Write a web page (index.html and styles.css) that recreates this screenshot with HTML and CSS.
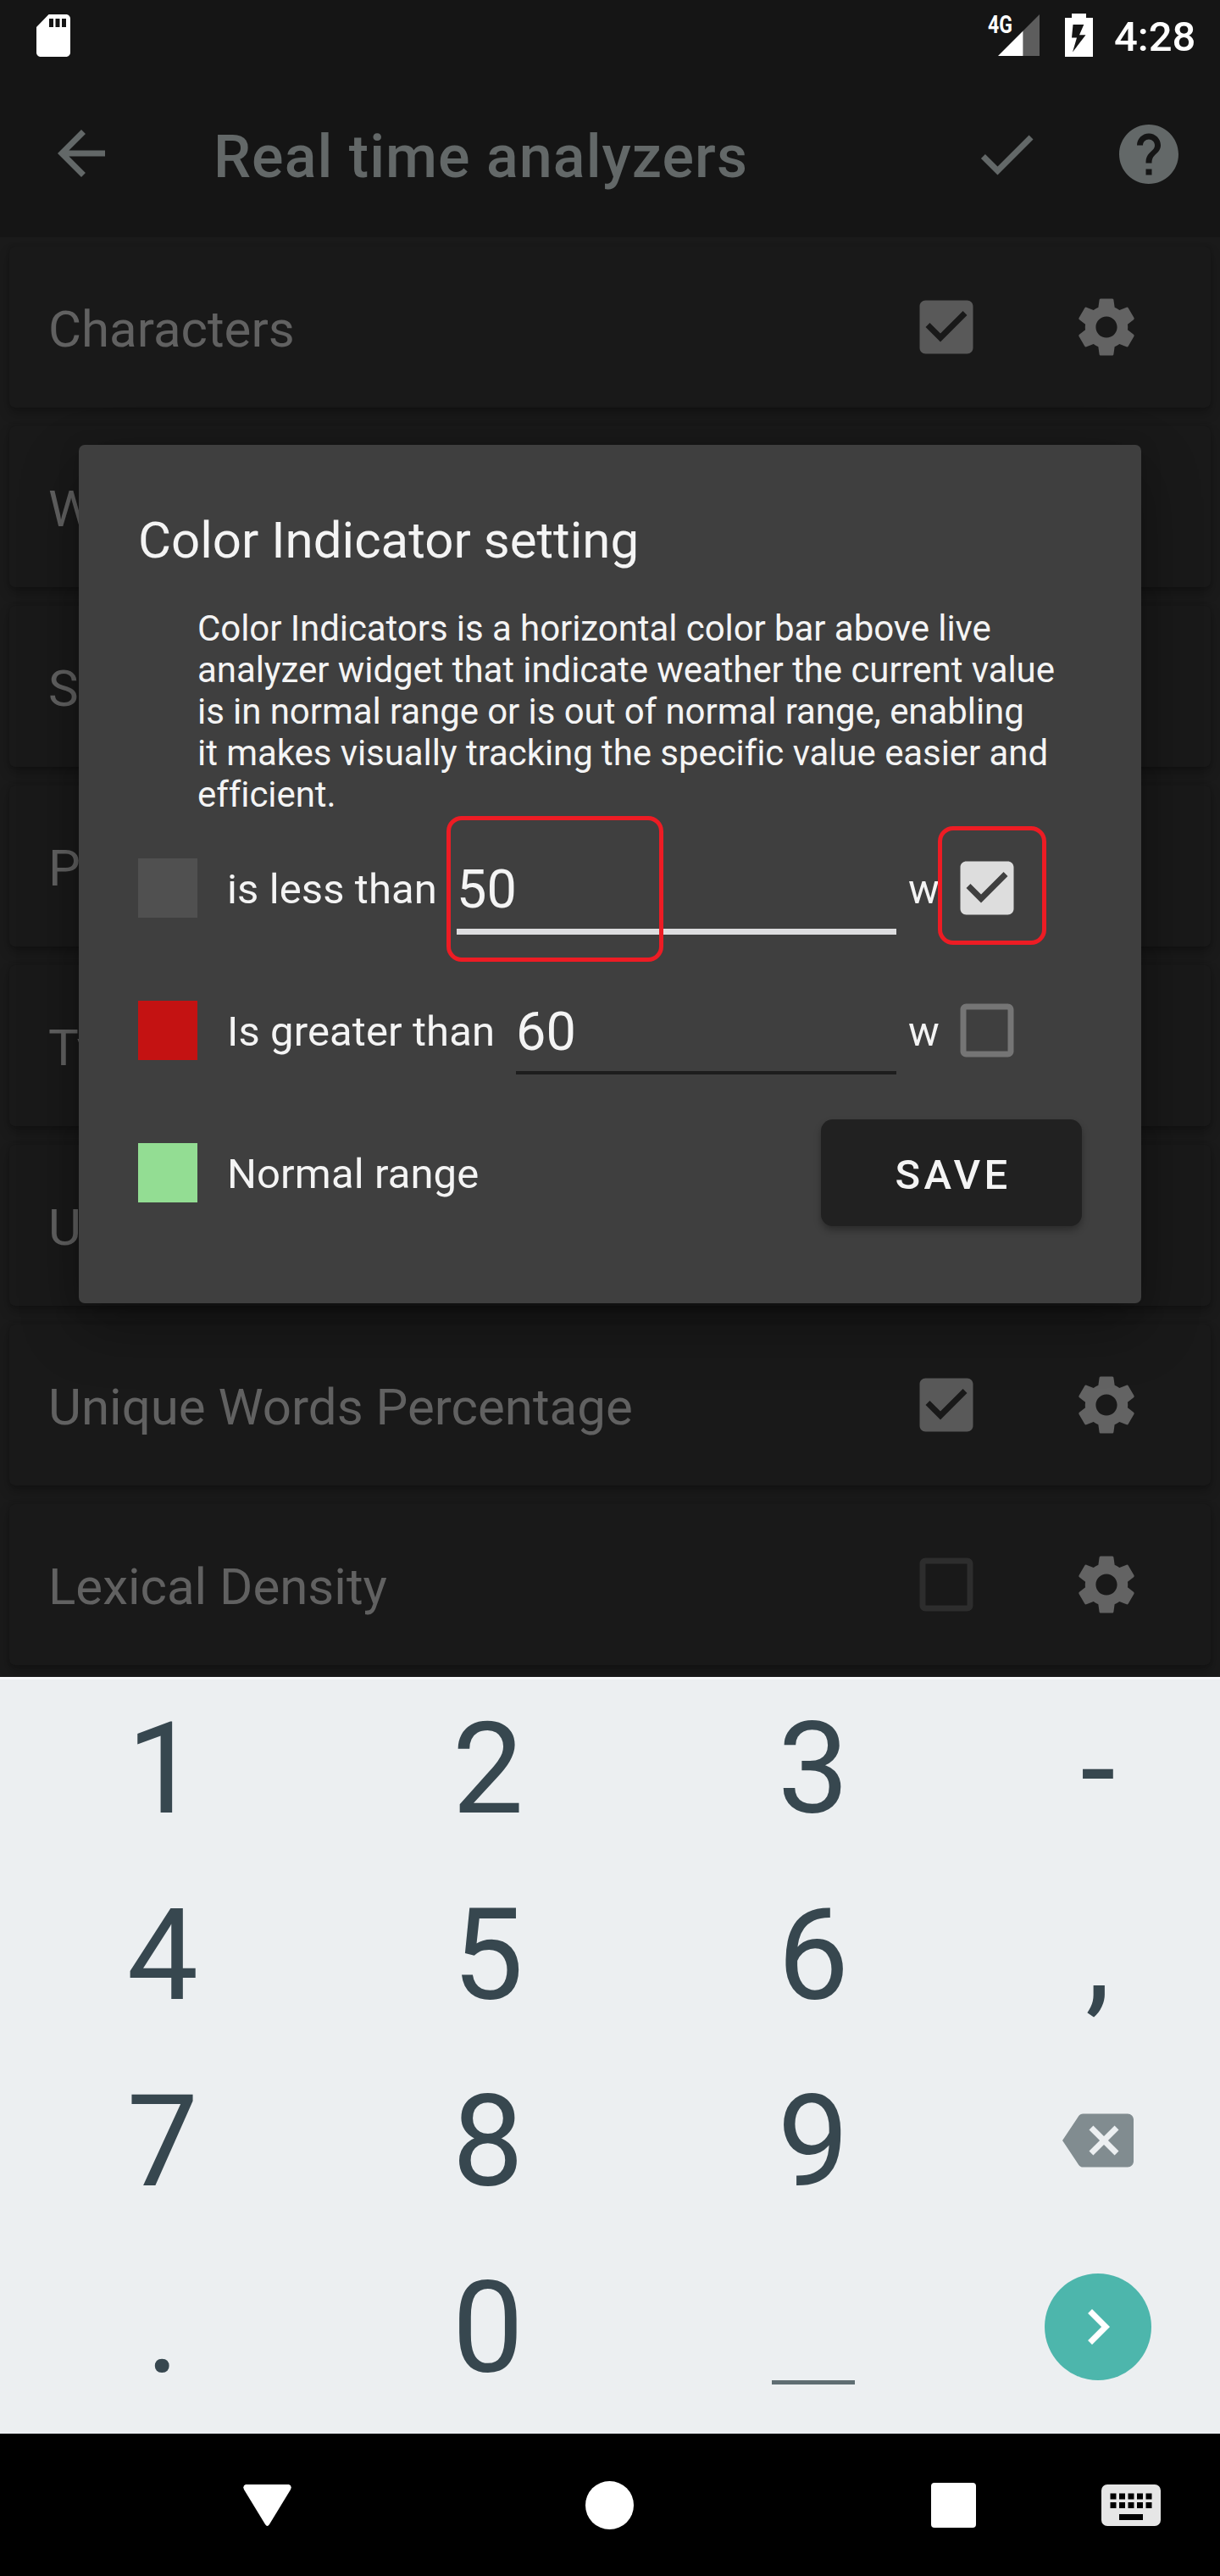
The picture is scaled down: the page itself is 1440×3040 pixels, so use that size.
FILE: index.html
```html
<!DOCTYPE html>
<html lang="en">
<head>
<meta charset="utf-8">
<title>Real time analyzers</title>
<link rel="stylesheet" href="styles.css">
</head>
<body>
<svg class="symbols" width="0" height="0" aria-hidden="true">
  <symbol id="box-on" viewBox="0 0 24 24"><path d="M19 3H5c-1.11 0-2 .9-2 2v14c0 1.1.89 2 2 2h14c1.11 0 2-.9 2-2V5c0-1.1-.89-2-2-2zm-9 14l-5-5 1.41-1.41L10 14.17l7.59-7.59L19 8l-9 9z"/></symbol>
  <symbol id="box-off" viewBox="0 0 24 24"><path d="M19 5v14H5V5h14m0-2H5c-1.1 0-2 .9-2 2v14c0 1.1.9 2 2 2h14c1.1 0 2-.9 2-2V5c0-1.1-.9-2-2-2z"/></symbol>
  <symbol id="gear" viewBox="0 0 24 24"><path d="M19.14 12.94c.04-.3.06-.61.06-.94 0-.32-.02-.64-.07-.94l2.03-1.58c.18-.14.23-.41.12-.61l-1.92-3.32c-.12-.22-.37-.29-.59-.22l-2.39.96c-.5-.38-1.03-.7-1.62-.94L14.4 2.81c-.04-.24-.24-.41-.48-.41h-3.84c-.24 0-.43.17-.47.41L9.25 5.35C8.66 5.59 8.12 5.92 7.63 6.29L5.24 5.33c-.22-.08-.47 0-.59.22L2.74 8.87c-.12.21-.08.47.12.61l2.03 1.58c-.05.3-.09.63-.09.94s.02.64.07.94l-2.03 1.58c-.18.14-.23.41-.12.61l1.92 3.32c.12.22.37.29.59.22l2.39-.96c.5.38 1.03.7 1.62.94l.36 2.54c.05.24.24.41.48.41h3.84c.24 0 .44-.17.47-.41l.36-2.54c.59-.24 1.13-.56 1.62-.94l2.39.96c.22.08.47 0 .59-.22l1.92-3.32c.12-.22.07-.47-.12-.61l-2.01-1.58zM12 15.6c-1.98 0-3.6-1.62-3.6-3.6s1.62-3.6 3.6-3.6 3.6 1.62 3.6 3.6-1.62 3.6-3.6 3.6z"/></symbol>
</svg>

<div class="screen">
  <div class="app">
    <div class="status">
      <svg class="sd" viewBox="0 0 24 24"><path d="M18 2h-8.2L4 8v12c0 1.100.9 2 2 2h12c1.100 0 2-.9 2-2V4c0-1.100-.9-2-2-2zm-6 6h-2V4h2v4zm3 0h-2V4h2v4zm3 0h-2V4h2v4z"/></svg>
      <svg class="signal" viewBox="0 0 62 51">
        <text class="net" x="0" y="23" textLength="29" lengthAdjust="spacingAndGlyphs">4G</text>
        <path d="M41.500 20.500L61 1v49H41.500z" fill="#5d5d5d"/>
        <path d="M12 50l29.500-29.500V50z" fill="#fff"/>
      </svg>
      <svg class="battery" viewBox="0 0 33 51"><path fill-rule="evenodd" d="M8 0h17v5h8v46H0V5h8zM9.500 13L8 28.500h6L9 45.500 24.500 25.200h-7.500L22.300 13z"/></svg>
      <span class="clock">4:28</span>
    </div>
    <div class="toolbar">
      <svg class="icon arrow" viewBox="0 0 24 24"><path d="M20 11H7.830l5.590-5.590L12 4l-8 8 8 8 1.410-1.410L7.830 13H20v-2z"/></svg>
      <h1 class="title">Real time analyzers</h1>
      <svg class="icon" viewBox="0 0 24 24"><path d="M9 16.170L4.830 12l-1.420 1.410L9 19 21 7l-1.410-1.410z"/></svg>
      <svg class="icon" viewBox="0 0 24 24"><path d="M12 2C6.480 2 2 6.480 2 12s4.480 10 10 10 10-4.480 10-10S17.520 2 12 2zm1 17h-2v-2h2v2zm2.070-7.750l-.9.920C13.450 12.900 13 13.500 13 15h-2v-.5c0-1.100.45-2.100 1.170-2.830l1.240-1.260c.37-.36.59-.86.59-1.410 0-1.100-.9-2-2-2s-2 .9-2 2H8c0-2.210 1.790-4 4-4s4 1.790 4 4c0 .88-.36 1.680-.93 2.250z"/></svg>
    </div>
    <div class="list">
      <div class="card"><span class="name">Characters</span><svg class="icon check"><use href="#box-on"/></svg><svg class="icon gear"><use href="#gear"/></svg></div>
      <div class="card"><span class="name">Words</span></div>
      <div class="card"><span class="name">Sentences</span></div>
      <div class="card"><span class="name">Paragraphs</span></div>
      <div class="card"><span class="name">Typing</span></div>
      <div class="card"><span class="name">Unique Words</span></div>
      <div class="card"><span class="name">Unique Words Percentage</span><svg class="icon check"><use href="#box-on"/></svg><svg class="icon gear"><use href="#gear"/></svg></div>
      <div class="card"><span class="name">Lexical Density</span><svg class="icon check off"><use href="#box-off"/></svg><svg class="icon gear"><use href="#gear"/></svg></div>
    </div>

    <div class="dialog">
      <h2 class="dialog-title">Color Indicator setting</h2>
      <p class="about">Color Indicators is a horizontal color bar above live<br>analyzer widget that indicate weather the current value<br>is in normal range or is out of normal range, enabling<br>it makes visually tracking the specific value easier and<br>efficient.</p>
      <div class="row">
        <span class="swatch gray"></span>
        <span class="label">is less than</span>
        <span class="field active">50<span class="mark mark-field"></span></span>
        <span class="unit">w</span>
        <span class="toggle"><svg class="icon on"><use href="#box-on"/></svg><span class="mark mark-toggle"></span></span>
      </div>
      <div class="row">
        <span class="swatch red"></span>
        <span class="label wide">Is greater than</span>
        <span class="field">60</span>
        <span class="unit">w</span>
        <span class="toggle"><svg class="icon"><use href="#box-off"/></svg></span>
      </div>
      <div class="row">
        <span class="swatch green"></span>
        <span class="label">Normal range</span>
        <button class="save">SAVE</button>
      </div>
    </div>
  </div>

  <div class="keyboard">
    <span class="key">1</span><span class="key">2</span><span class="key">3</span><span class="key">-</span>
    <span class="key">4</span><span class="key">5</span><span class="key">6</span><span class="key">,</span>
    <span class="key">7</span><span class="key">8</span><span class="key">9</span>
    <span class="key"><svg class="icon erase" viewBox="0 0 24 24"><path d="M22 3H7c-.69 0-1.230.35-1.590.88L0 12l5.410 8.110c.36.53.9.89 1.590.89h15c1.100 0 2-.9 2-2V5c0-1.100-.9-2-2-2zm-3 12.590L17.590 17 14 13.410 10.410 17 9 15.590 12.590 12 9 8.410 10.410 7 14 10.590 17.590 7 19 8.410 15.410 12 19 15.590z"/></svg></span>
    <span class="key">.</span><span class="key">0</span>
    <span class="key"><span class="space"></span></span>
    <span class="key"><span class="enter"><svg class="icon" viewBox="0 0 24 24"><path d="M10 6L8.590 7.410 13.170 12l-4.580 4.590L10 18l6-6z"/></svg></span></span>
  </div>

  <div class="nav">
    <svg class="back" viewBox="0 0 57 50"><path d="M3 0h51q4 1.500 2 6L31 47q-2.500 4-5 0L1 6Q-1 1.500 3 0z"/></svg>
    <span class="home"></span>
    <span class="recent"></span>
    <svg class="ime" viewBox="0 0 20 14"><path fill-rule="evenodd" d="M2 0h16a2 2 0 0 1 2 2v10a2 2 0 0 1-2 2H2a2 2 0 0 1-2-2V2a2 2 0 0 1 2-2zM3 3v2h2V3zM6 3v2h2V3zM9 3v2h2V3zM12 3v2h2V3zM15 3v2h2V3zM3 6v2h2V6zM6 6v2h2V6zM9 6v2h2V6zM12 6v2h2V6zM15 6v2h2V6zM6 10v2h8v-2z"/></svg>
  </div>
</div>
</body>
</html>
```
FILE: styles.css
```css
* { box-sizing: border-box; }

body {
  margin: 0;
  background: #000;
  font-family: Roboto, "Noto Sans", sans-serif;
}

h1, h2, p { margin: 0; font-weight: 400; }
svg { display: block; flex: none; fill: currentColor; }
.symbols { position: absolute; }
.icon { width: 84px; height: 84px; }

.screen {
  display: flex;
  flex-direction: column;
  width: 1440px;
  height: 3040px;
  overflow: hidden;
}

.app {
  position: relative;
  height: 1979px;
  overflow: hidden;
  background: #1a1a1a;
}

/* status bar */
.status {
  display: flex;
  height: 84px;
  padding: 0 31px 0 33px;
  background: #151515;
  color: #fff;
}
.sd { width: 60px; height: 60px; margin-top: 12px; }
.signal { width: 62px; height: 51px; margin: 16px 0 0 auto; overflow: visible; }
.net { font-size: 30px; font-weight: 700; fill: #fff; }
.battery { width: 33px; height: 51px; margin: 16px 0 0 29px; }
.clock {
  width: 94px;
  margin-left: 25px;
  font-size: 49px;
  font-weight: 500;
  line-height: 88px;
  white-space: nowrap;
}

/* toolbar */
.toolbar {
  display: flex;
  align-items: center;
  height: 196px;
  padding: 0 42px 0 54px;
  background: #151515;
  color: #636868;
}
.toolbar .icon { margin-bottom: 1px; }
.toolbar .arrow { margin-bottom: 3px; }
.title {
  flex: 1;
  margin-left: 114px;
  padding-top: 6px;
  font-size: 70px;
  font-weight: 500;
  line-height: 82px;
  letter-spacing: 1.05px;
}
.toolbar .icon:last-child { margin-left: 84px; }

/* analyzer list */
.list {
  display: flex;
  flex-direction: column;
  gap: 22px;
  padding: 11px 11px 0;
}
.card {
  display: flex;
  align-items: center;
  flex: none;
  height: 190px;
  padding: 0 81px 0 46px;
  border-radius: 7px;
  background: #191919;
  box-shadow: 0 7px 13px rgba(0, 0, 0, .26), 0 0 4px rgba(0, 0, 0, .14);
  color: #616161;
}
.name { flex: 1; padding-top: 5px; font-size: 60px; line-height: 70px; }
.check { color: #595959; }
.check.off { color: #2d2d2d; }
.gear { margin-left: 105px; color: #636363; }

/* dialog */
.dialog {
  position: absolute;
  top: 525px;
  left: 93px;
  width: 1254px;
  height: 1013px;
  padding: 78px 70px 0;
  border-radius: 7px;
  background: #3f3f3f;
  box-shadow: 0 28px 70px rgba(0, 0, 0, .3), 0 4px 24px rgba(0, 0, 0, .15);
  color: #f4f4f4;
}
.dialog-title { font-size: 60px; line-height: 70px; }
.about {
  margin: 44px 0 2px;
  padding-left: 70px;
  font-size: 42px;
  line-height: 49px;
  letter-spacing: -.07px;
  white-space: nowrap;
}
.row { display: flex; align-items: center; height: 168px; }
.swatch { flex: none; width: 70px; height: 70px; }
.gray { background: #505050; }
.red { background: #c41212; }
.green { background: #93dd93; }
.label {
  flex: none;
  width: 271px;
  margin-left: 35px;
  padding-top: 4px;
  font-size: 49px;
  line-height: 58px;
  letter-spacing: .1px;
  white-space: nowrap;
}
.label.wide { width: 341px; }
.field {
  position: relative;
  flex: 1;
  align-self: flex-start;
  margin-top: 31px;
  padding-top: 8px;
  border-bottom: 4px solid #1d1d1d;
  font-size: 63px;
  line-height: 93px;
}
.field.active { border-bottom: 7px solid #dddddf; }
.unit { margin-left: 14px; padding-top: 4px; font-size: 49px; line-height: 58px; width: 37px; }
.toggle { position: relative; margin: 0 70px 0 14px; color: #757575; }
.toggle .on { color: #ddd; }
.mark { position: absolute; border: 5px solid #ed1c24; border-radius: 18px; }
.mark-field { left: -12px; top: -32px; width: 256px; height: 172px; }
.mark-toggle { left: -16px; top: -31px; width: 128px; height: 140px; }
.save {
  width: 308px;
  height: 126px;
  margin-left: auto;
  padding: 5px 0 0 4px;
  border: 0;
  border-radius: 14px;
  background: #212121;
  box-shadow: 0 5px 9px rgba(0, 0, 0, .3);
  color: #f4f4f4;
  font: 500 49px/58px Roboto, "Noto Sans", sans-serif;
  letter-spacing: 4.4px;
}

/* number keyboard */
.keyboard {
  display: grid;
  grid-template-columns: 384px 384px 384px 288px;
  grid-auto-rows: 220px;
  height: 893px;
  border-top: 3px solid #f7f8fa;
  background: #eceff1;
  color: #37474f;
}
.key {
  display: flex;
  align-items: center;
  justify-content: center;
  padding-bottom: 8px;
  font-size: 150px;
  line-height: 210px;
}
.erase { margin-top: -4px; color: #818c90; }
.space { width: 98px; height: 5px; margin-top: 127px; background: #5f6e73; }
.enter {
  display: flex;
  align-items: center;
  justify-content: center;
  width: 126px;
  height: 126px;
  margin-top: -4px;
  border-radius: 50%;
  background: #4db6ac;
  color: #fff;
}

/* navigation bar */
.nav {
  display: flex;
  align-items: center;
  height: 168px;
  padding-left: 287px;
  background: #000;
  color: #fff;
}
.back { width: 57px; height: 50px; margin-top: 1px; }
.home { width: 57px; height: 57px; margin-left: 347px; border-radius: 50%; background: #fff; }
.recent { width: 53px; height: 53px; margin-left: 351px; border-radius: 4px; background: #fff; }
.ime { width: 70px; height: 49px; margin-left: 148px; color: #e6e6e6; }
```
